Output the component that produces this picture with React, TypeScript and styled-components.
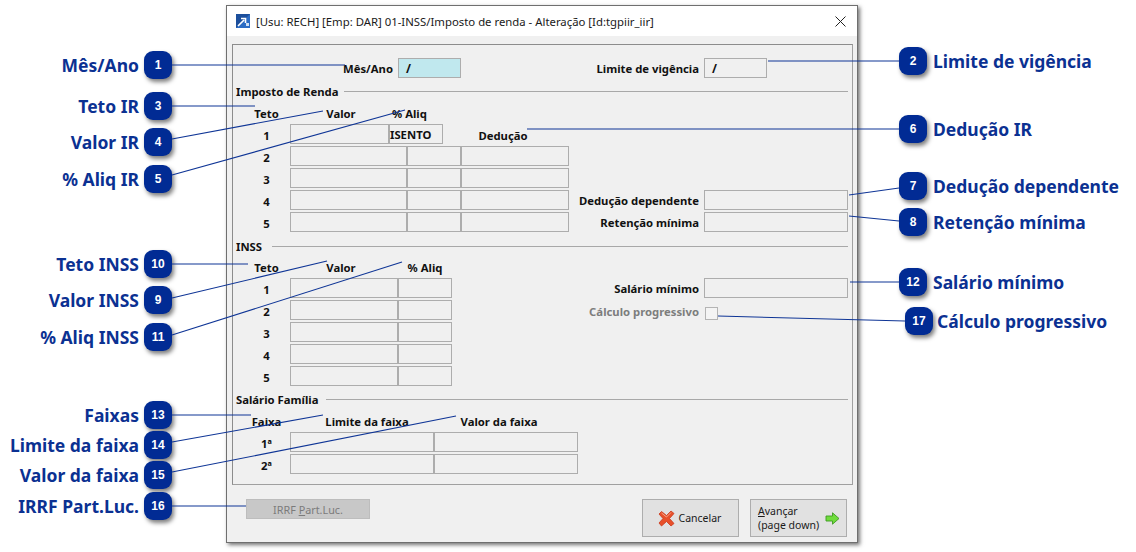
import * as React from "react";
import styled, { createGlobalStyle } from "styled-components";

const GlobalStyle = createGlobalStyle`
  html, body {
    margin: 0;
    padding: 0;
    background: #fff;
  }
`;

const LEFT_CALLOUTS = [
  { n: 1, label: "Mês/Ano", mt: 51 },
  { n: 3, label: "Teto IR", mt: 13 },
  { n: 4, label: "Valor IR", mt: 8 },
  { n: 5, label: "% Aliq IR", mt: 9 },
  { n: 10, label: "Teto INSS", mt: 57 },
  { n: 9, label: "Valor INSS", mt: 8 },
  { n: 11, label: "% Aliq INSS", mt: 9 },
  { n: 13, label: "Faixas", mt: 50 },
  { n: 14, label: "Limite da faixa", mt: 2 },
  { n: 15, label: "Valor da faixa", mt: 2 },
  { n: 16, label: "IRRF Part.Luc.", mt: 3 },
];

const RIGHT_CALLOUTS = [
  { n: 2, label: "Limite de vigência", mt: 47, ml: 0 },
  { n: 6, label: "Dedução IR", mt: 40, ml: 0 },
  { n: 7, label: "Dedução dependente", mt: 29, ml: 0 },
  { n: 8, label: "Retenção mínima", mt: 8, ml: 0 },
  { n: 12, label: "Salário mínimo", mt: 32, ml: 0 },
  { n: 17, label: "Cálculo progressivo", mt: 11, ml: 6 },
];

// x1 y1 x2 y2 of each leader line
const LEADERS = [
  [172, 65, 345, 65],
  [172, 106, 255, 106],
  [172, 139, 323, 111],
  [172, 175, 405, 110],
  [768, 61, 899, 61],
  [527, 129, 899, 129],
  [849, 195, 899, 188],
  [849, 216, 899, 221],
  [850, 282, 899, 282],
  [718, 316, 905, 321],
  [172, 264, 248, 264],
  [172, 298, 327, 261],
  [172, 335, 402, 262],
  [172, 415, 251, 415],
  [172, 442, 323, 415],
  [172, 472, 456, 416],
  [172, 506, 246, 506],
];

const App = () => {
  return (
    <Page>
      <GlobalStyle />
      <LeftRail>
        {LEFT_CALLOUTS.map((c) => (
          <Callout key={c.n} $mt={c.mt} $left>
            <Badge>{c.n}</Badge>
            <CalloutText>{c.label}</CalloutText>
          </Callout>
        ))}
      </LeftRail>

      <Dialog>
        <TitleBar>
          <svg width="14" height="14" viewBox="0 0 14 14">
            <rect width="14" height="14" fill="#1c4f9c" />
            <path d="M0 14 L14 0 V14 Z" fill="#2c6cc4" />
            <path d="M2 12 L8 6 M5 4.5 H9.5 V9" stroke="#fff" strokeWidth="1.6" fill="none" />
            <path d="M10 12 h3 v-3 h-3 Z" fill="#cfe0f4" />
          </svg>
          <TitleText>[Usu: RECH] [Emp: DAR] 01-INSS/Imposto de renda - Alteração [Id:tgpiir_iir]</TitleText>
          <CloseIcon width="11" height="11" viewBox="0 0 11 11">
            <path d="M0.5 0.5 L10.5 10.5 M10.5 0.5 L0.5 10.5" stroke="#222" strokeWidth="1" />
          </CloseIcon>
        </TitleBar>

        <Body>
          <Panel>
            <FieldRow>
              <TopLabel>Mês/Ano</TopLabel>
              <Field $w={63} $tint>
                /
              </Field>
              <Aside>
                <FormLabel>Limite de vigência</FormLabel>
                <Slot>
                  <Field $w={63}>/</Field>
                </Slot>
              </Aside>
            </FieldRow>

            <Heading $mt={6}>
              <HeadingText $w={108}>Imposto de Renda</HeadingText>
              <HeadingLine />
            </Heading>
            <HeaderRow $mt={9}>
              <NumCell $head>Teto</NumCell>
              <ColHead $w={102}>Valor</ColHead>
              <ColHead $w={32}>% Aliq</ColHead>
            </HeaderRow>
            <FieldRow>
              <NumCell>1</NumCell>
              <Field $w={99} />
              <Field $w={54} $top>
                ISENTO
              </Field>
              <ColHead $w={120} $drop>
                Dedução
              </ColHead>
            </FieldRow>
            {[2, 3, 4, 5].map((n) => (
              <FieldRow key={n}>
                <NumCell>{n}</NumCell>
                <Field $w={117} />
                <Field $w={54} />
                <Field $w={108} />
                {n === 4 && (
                  <Aside>
                    <FormLabel>Dedução dependente</FormLabel>
                    <Slot>
                      <Field $w={144} />
                    </Slot>
                  </Aside>
                )}
                {n === 5 && (
                  <Aside>
                    <FormLabel>Retenção mínima</FormLabel>
                    <Slot>
                      <Field $w={144} />
                    </Slot>
                  </Aside>
                )}
              </FieldRow>
            ))}

            <Heading $mt={7}>
              <HeadingText $w={36}>INSS</HeadingText>
              <HeadingLine />
            </Heading>
            <HeaderRow $mt={8}>
              <NumCell $head>Teto</NumCell>
              <ColHead $w={102}>Valor</ColHead>
              <ColHead $w={66}>% Aliq</ColHead>
            </HeaderRow>
            {[1, 2, 3, 4, 5].map((n) => (
              <FieldRow key={n}>
                <NumCell>{n}</NumCell>
                <Field $w={108} />
                <Field $w={54} />
                {n === 1 && (
                  <Aside>
                    <FormLabel>Salário mínimo</FormLabel>
                    <Slot>
                      <Field $w={144} />
                    </Slot>
                  </Aside>
                )}
                {n === 2 && (
                  <Aside>
                    <FormLabel $muted>Cálculo progressivo</FormLabel>
                    <Slot>
                      <Check />
                    </Slot>
                  </Aside>
                )}
              </FieldRow>
            ))}

            <Heading $mt={6}>
              <HeadingText $w={90}>Salário Família</HeadingText>
              <HeadingLine />
            </Heading>
            <HeaderRow $mt={9}>
              <NumCell $head>Faixa</NumCell>
              <ColHead $w={154}>Limite da faixa</ColHead>
              <ColHead $w={110}>Valor da faixa</ColHead>
            </HeaderRow>
            {["1ª", "2ª"].map((n) => (
              <FieldRow key={n}>
                <NumCell>{n}</NumCell>
                <Field $w={144} />
                <Field $w={144} />
              </FieldRow>
            ))}
          </Panel>

          <Footer>
            <DisabledButton>
              <span>
                IRRF <u>P</u>art.Luc.
              </span>
            </DisabledButton>
            <ActionButton>
              <svg width="17" height="17" viewBox="0 0 17 17">
                <path
                  d="M3.5 1.5 L8.5 5.5 L13 1 L16 3.5 L11.5 8.5 L16 13.5 L13 16 L8.5 11.5 L3.5 16 L1 13 L5 8.5 L1 4 Z"
                  fill="#e8502a"
                  stroke="#c9381a"
                  strokeWidth="0.8"
                  strokeLinejoin="round"
                />
                <path d="M3.5 3 L8.5 7 L13 2.5" stroke="#f7a58a" strokeWidth="1" fill="none" />
              </svg>
              <span>Cancelar</span>
            </ActionButton>
            <ActionButton $split>
              <span>
                <u>A</u>vançar
                <br />
                (page down)
              </span>
              <svg width="15" height="13" viewBox="0 0 15 13">
                <path
                  d="M1 4 H7.5 V0.8 L14 6.5 L7.5 12.2 V9 H1 Z"
                  fill="#6fdc3c"
                  stroke="#3f9a22"
                  strokeWidth="0.9"
                  strokeLinejoin="round"
                />
              </svg>
            </ActionButton>
          </Footer>
        </Body>
      </Dialog>

      <RightRail>
        {RIGHT_CALLOUTS.map((c) => (
          <Callout key={c.n} $mt={c.mt} $ml={c.ml}>
            <Badge>{c.n}</Badge>
            <CalloutText>{c.label}</CalloutText>
          </Callout>
        ))}
      </RightRail>

      <Leaders width="1136" height="552" viewBox="0 0 1136 552">
        {LEADERS.map(([x1, y1, x2, y2], i) => (
          <line key={i} x1={x1} y1={y1} x2={x2} y2={y2} stroke="#0f3596" strokeWidth="1.1" />
        ))}
      </Leaders>
    </Page>
  );
};

const Page = styled.div`
  position: relative;
  display: flex;
  align-items: flex-start;
  width: 1136px;
  height: 552px;
  overflow: hidden;
  background: #fff;
`;

const LeftRail = styled.div`
  display: flex;
  flex-direction: column;
  flex: none;
  width: 172px;
  margin-right: 54px;
`;

const RightRail = styled.div`
  display: flex;
  flex-direction: column;
  flex: none;
  margin-left: 41px;
`;

const Callout = styled.div<{ $mt: number; $ml?: number; $left?: boolean }>`
  display: flex;
  flex-direction: ${(p) => (p.$left ? "row-reverse" : "row")};
  align-items: center;
  gap: ${(p) => (p.$left ? 5 : p.$ml ? 4 : 6)}px;
  height: 28px;
  margin-top: ${(p) => p.$mt}px;
  margin-left: ${(p) => p.$ml || 0}px;
  white-space: nowrap;
`;

const Badge = styled.div`
  display: flex;
  flex: none;
  align-items: center;
  justify-content: center;
  width: 28px;
  height: 28px;
  border-radius: 9px;
  background: #012b94;
  box-shadow: 2px 3px 4px rgba(0, 0, 0, 0.5);
  color: #fff;
  font-family: "Liberation Sans", sans-serif;
  font-size: 12px;
  font-weight: 700;
`;

const CalloutText = styled.span`
  color: #0b3192;
  font-family: "Noto Sans", sans-serif;
  font-size: 17.5px;
  font-weight: 700;
`;

const Dialog = styled.div`
  display: flex;
  flex: none;
  flex-direction: column;
  box-sizing: border-box;
  width: 632px;
  height: 538px;
  margin-top: 5px;
  border: 1px solid #6f6f6f;
  box-shadow: 2px 2px 4px rgba(0, 0, 0, 0.55);
  background: #f0f0f0;
`;

const TitleBar = styled.div`
  display: flex;
  align-items: center;
  gap: 6px;
  height: 30px;
  padding: 0 11px 0 9px;
  background: #fff;
`;

const TitleText = styled.span`
  color: #1a1a1a;
  font-family: "Noto Sans", sans-serif;
  font-size: 11.35px;
  white-space: nowrap;
`;

const CloseIcon = styled.svg`
  margin-left: auto;
`;

const Body = styled.div`
  display: flex;
  flex-direction: column;
  padding: 8px 4px 0 5px;
`;

const Panel = styled.div`
  box-sizing: border-box;
  width: 621px;
  padding: 13px 4px 8px 0;
  border: 1px solid #8c8c8c;
  border-right-color: #a0a0a0;
  border-bottom-color: #a0a0a0;
  font-family: "Noto Sans", sans-serif;
  font-size: 11.3px;
  font-weight: 700;
  color: #111;
`;

const FieldRow = styled.div`
  display: flex;
  align-items: center;
  height: 20px;
  margin-bottom: 2px;
`;

const HeaderRow = styled.div<{ $mt: number }>`
  display: flex;
  align-items: center;
  box-sizing: border-box;
  height: 14px;
  margin: ${(p) => p.$mt}px 0 3px;
  padding-bottom: 2px;
`;

const NumCell = styled.div<{ $head?: boolean }>`
  flex: none;
  box-sizing: border-box;
  width: 57px;
  padding: ${(p) => (p.$head ? 0 : 3)}px 0 0 10px;
  text-align: center;
`;

const ColHead = styled.div<{ $w: number; $drop?: boolean }>`
  flex: none;
  box-sizing: border-box;
  width: ${(p) => p.$w}px;
  margin-top: ${(p) => (p.$drop ? 2 : 0)}px;
  text-align: center;
  white-space: nowrap;
`;

const TopLabel = styled.div`
  flex: none;
  width: 160px;
  margin-right: 5px;
  text-align: right;
`;

const FormLabel = styled.div<{ $muted?: boolean }>`
  padding-top: ${(p) => (p.$muted ? 2 : 0)}px;
  color: ${(p) => (p.$muted ? "#7d7d7d" : "inherit")};
  white-space: nowrap;
`;

const Field = styled.div<{ $w: number; $tint?: boolean; $top?: boolean }>`
  flex: none;
  box-sizing: border-box;
  width: ${(p) => p.$w}px;
  height: 20px;
  padding: ${(p) => (p.$top ? "2px 0 0 0" : "2px 0 0 7px")};
  border: 1px solid #adadad;
  background: ${(p) => (p.$tint ? "#c0e8ee" : "#f0f0f0")};
  font-size: ${(p) => (p.$top ? 11.3 : 12)}px;
  line-height: 15px;
`;

const Aside = styled.div`
  display: flex;
  align-items: center;
  gap: 5px;
  margin-left: auto;
`;

const Slot = styled.div`
  flex: none;
  width: 144px;
`;

const Check = styled.div`
  box-sizing: border-box;
  width: 13px;
  height: 13px;
  margin: 6px 0 0 1px;
  border: 1px solid #b4b4b4;
  background: #f4f4f4;
`;

const Heading = styled.div<{ $mt: number }>`
  display: flex;
  align-items: center;
  height: 14px;
  margin-top: ${(p) => p.$mt}px;
  padding-left: 3px;
`;

const HeadingText = styled.div<{ $w: number }>`
  flex: none;
  width: ${(p) => p.$w}px;
  white-space: nowrap;
`;

const HeadingLine = styled.div`
  flex: 1;
  height: 1px;
  background: #a8a8a8;
`;

const Footer = styled.div`
  display: flex;
  align-items: flex-start;
  gap: 11px;
  margin-top: 14px;
  padding: 0 6px 0 14px;
`;

const DisabledButton = styled.div`
  display: flex;
  align-items: center;
  justify-content: center;
  box-sizing: border-box;
  width: 124px;
  height: 20px;
  margin-right: auto;
  border: 1px solid #bdbdbd;
  background: #c8c8c8;
  color: #7b7b7b;
  font-family: "Noto Sans", sans-serif;
  font-size: 10.8px;
`;

const ActionButton = styled.div<{ $split?: boolean }>`
  display: flex;
  align-items: center;
  justify-content: ${(p) => (p.$split ? "space-between" : "center")};
  gap: 4px;
  box-sizing: border-box;
  width: 97px;
  height: 38px;
  padding: ${(p) => (p.$split ? "0 6px 0 7px" : "0 2px 0 0")};
  border: 1px solid #adadad;
  background: #e1e1e1;
  color: #1a1a1a;
  font-family: "Noto Sans", sans-serif;
  font-size: 10.5px;
  line-height: 14px;
`;

const Leaders = styled.svg`
  position: absolute;
  top: 0;
  left: 0;
  pointer-events: none;
`;

export default App;
